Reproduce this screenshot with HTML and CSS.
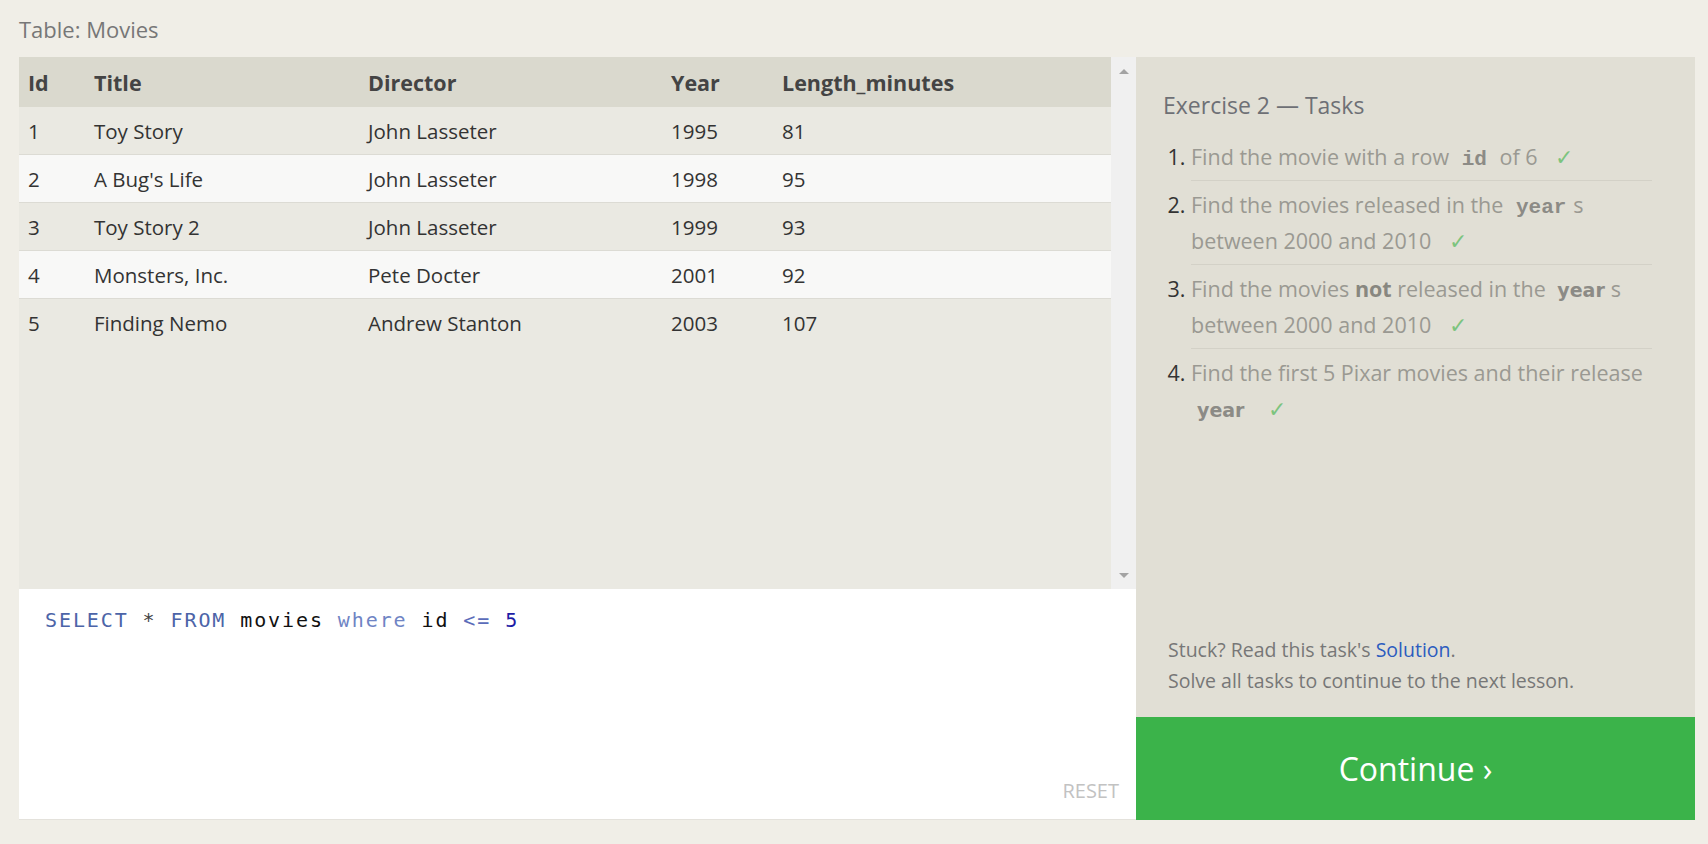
FILE: index.html
```html
<!DOCTYPE html>
<html>
<head>
<meta charset="utf-8">
<title>Exercise 2</title>
<link rel="stylesheet" href="styles.css">
</head>
<body>
<div class="page">
  <div class="caption">Table: Movies</div>
  <div class="main">
    <div class="left">
      <div class="results">
        <div class="table-area">
          <table class="grid">
            <thead>
              <tr><th class="c-id">Id</th><th class="c-title">Title</th><th class="c-dir">Director</th><th class="c-year">Year</th><th>Length_minutes</th></tr>
            </thead>
            <tbody>
              <tr><td>1</td><td>Toy Story</td><td>John Lasseter</td><td>1995</td><td>81</td></tr>
              <tr><td>2</td><td>A Bug's Life</td><td>John Lasseter</td><td>1998</td><td>95</td></tr>
              <tr><td>3</td><td>Toy Story 2</td><td>John Lasseter</td><td>1999</td><td>93</td></tr>
              <tr><td>4</td><td>Monsters, Inc.</td><td>Pete Docter</td><td>2001</td><td>92</td></tr>
              <tr><td>5</td><td>Finding Nemo</td><td>Andrew Stanton</td><td>2003</td><td>107</td></tr>
            </tbody>
          </table>
        </div>
        <div class="scrollbar">
          <span class="arrow arrow-up"></span>
          <span class="arrow arrow-down"></span>
        </div>
      </div>
      <div class="editor">
        <div class="code"><span class="kw">SELECT</span> <span class="op">*</span> <span class="kw">FROM</span> <span class="ident">movies</span> <span class="kw2">where</span> <span class="ident">id</span> <span class="cmp">&lt;=</span> <span class="num">5</span></div>
        <div class="reset">RESET</div>
      </div>
    </div>
    <div class="right">
      <div class="tasks">
        <h2 class="tasks-title">Exercise 2 — Tasks</h2>
        <ol class="task-list">
          <li>Find the movie with a row <code class="mono">id</code> of 6 <span class="check">✓</span></li>
          <li>Find the movies released in the <code class="mono">year</code>s between 2000 and 2010 <span class="check">✓</span></li>
          <li>Find the movies <strong>not</strong> released in the <code class="sansb">year</code>s between 2000 and 2010 <span class="check">✓</span></li>
          <li>Find the first 5 Pixar movies and their release <code class="sansb">year</code> <span class="check">✓</span></li>
        </ol>
      </div>
      <div class="help">
        <p>Stuck? Read this task's <a href="#" class="link">Solution</a>.</p>
        <p>Solve all tasks to continue to the next lesson.</p>
      </div>
      <button class="continue">Continue ›</button>
    </div>
  </div>
</div>
</body>
</html>
```

FILE: styles.css
```css
html, body {
  margin: 0;
  padding: 0;
}
body {
  background: #f0eee7;
  font-family: "Open Sans", "Noto Sans", sans-serif;
  color: #333;
  width: 1708px;
  height: 844px;
  overflow: hidden;
}
.page {
  padding: 0 13px 0 19px;
}
.caption {
  height: 57px;
  box-sizing: border-box;
  padding-top: 14px;
  font-size: 22px;
  line-height: 30px;
  color: #777;
}
.main {
  display: flex;
  height: 763px;
}
.left {
  width: 1117px;
  display: flex;
  flex-direction: column;
}
.results {
  height: 532px;
  display: flex;
  background: #eae9e2;
}
.table-area {
  flex: 1;
  background: #eae9e2;
}
.grid {
  width: 100%;
  border-collapse: collapse;
  font-size: 20.5px;
}
.grid th {
  background: #dad9ce;
  color: #444;
  font-weight: 700;
  font-size: 21.5px;
  text-align: left;
  height: 50px;
  padding: 0 0 0 9px;
}
.grid td {
  height: 47px;
  padding: 0 0 0 9px;
  color: #333;
  border-bottom: 1px solid #dcdbd4;
}
.grid tbody tr:last-child td {
  border-bottom: none;
}
.grid tbody tr:nth-child(even) td {
  background: #f8f8f7;
}
.grid .c-id { width: 57px; }
.grid .c-title { width: 265px; }
.grid .c-dir { width: 294px; }
.grid .c-year { width: 102px; }
.scrollbar {
  width: 25px;
  background: #f0f0f0;
  display: flex;
  flex-direction: column;
  justify-content: space-between;
  align-items: center;
  padding: 12px 0 11px;
  box-sizing: border-box;
}
.arrow {
  width: 0;
  height: 0;
  border-left: 5px solid transparent;
  border-right: 5px solid transparent;
}
.arrow-up {
  border-bottom: 5px solid #a3a3a3;
}
.arrow-down {
  border-top: 5px solid #a3a3a3;
}
.editor {
  flex: 1;
  background: #fff;
  display: flex;
  flex-direction: column;
  justify-content: space-between;
  border-bottom: 1px solid #e4e2dc;
}
.code {
  font-family: "DejaVu Sans Mono", monospace;
  font-size: 20px;
  letter-spacing: 1.9px;
  padding: 16px 0 0 26px;
  line-height: 30px;
  color: #111;
}
.kw { color: #4c64a8; }
.kw2 { color: #6f84c4; }
.op { color: #444; }
.ident { color: #111; }
.cmp { color: #5b6cba; }
.num { color: #1c1ca6; }
.reset {
  align-self: flex-end;
  color: #c2c2c2;
  font-size: 20px;
  line-height: 24px;
  padding: 0 17px 16px 0;
}
.right {
  flex: 1;
  background: #e1dfd5;
  display: flex;
  flex-direction: column;
}
.tasks {
  flex: 1;
  padding: 32px 30px 0 27px;
}
.tasks-title {
  margin: 0 0 12px;
  font-size: 23px;
  font-weight: 400;
  line-height: 32px;
  color: #6e7075;
}
.task-list {
  margin: 0;
  padding: 0 0 0 28px;
  font-size: 21.5px;
  color: #9a9992;
}
.task-list li {
  line-height: 36px;
  padding: 6px 0 6px;
  background: linear-gradient(#d3d1c7, #d3d1c7) left bottom / calc(100% - 13px) 1px no-repeat;
}
.task-list li:last-child {
  background: none;
}
.task-list li::marker {
  color: #333;
}
.mono {
  font-family: "Liberation Mono", monospace;
  font-weight: 700;
  font-size: 21px;
  line-height: 1;
  color: #8c8b86;
  padding: 0 7px;
}
.sansb {
  font-family: "DejaVu Sans", sans-serif;
  font-weight: 700;
  font-size: 19px;
  line-height: 1;
  color: #8c8b86;
  padding: 0 6px 0 6px;
}
.task-list strong {
  color: #888780;
}
.check {
  color: #7cc47e;
  margin-left: 12px;
  font-size: 22px;
  line-height: 1;
}
.help {
  padding: 0 20px 21px 32px;
  font-size: 19.5px;
  line-height: 30.5px;
  color: #777;
}
.help p {
  margin: 0;
}
.link {
  color: #2c5cbf;
  text-decoration: none;
}
.continue {
  height: 103px;
  border: none;
  background: #3bb34a;
  color: #fff;
  font-family: "Open Sans", "Noto Sans", sans-serif;
  font-size: 32px;
  width: 100%;
  padding: 0;
  cursor: pointer;
}
```
